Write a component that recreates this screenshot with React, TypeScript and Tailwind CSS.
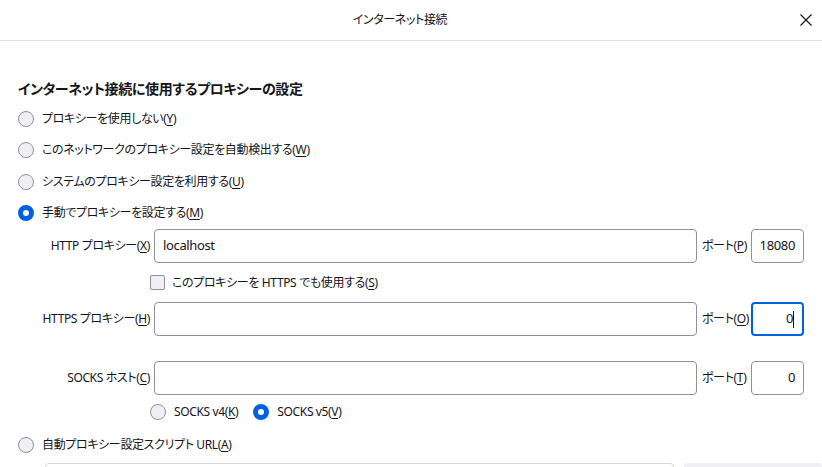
import { ReactNode } from "react";

const Key = ({ k }: { k: string }) => (
  <span>
    (<u className="underline-offset-2">{k}</u>)
  </span>
);

const Radio = ({ checked }: { checked?: boolean }) =>
  checked ? (
    <span className="w-4 h-4 rounded-full border-[5px] border-[#0061e0] bg-white shrink-0" />
  ) : (
    <span className="w-4 h-4 rounded-full border border-[#8f8f9d] bg-[#f0f0f4] shrink-0" />
  );

const RadioRow = ({ checked, children }: { checked?: boolean; children: ReactNode }) => (
  <div className="h-[31.5px] flex items-center gap-2">
    <Radio checked={checked} />
    <span>{children}</span>
  </div>
);

const Field = ({ value, focused, right }: { value?: string; focused?: boolean; right?: boolean }) => (
  <div
    className={`h-full rounded-[4px] flex items-center px-2 text-[13px] ${right ? "justify-end" : ""} ${
      focused ? "border-2 border-[#0061e0]" : "border border-[#8f8f9d]"
    }`}
  >
    <span>{value}</span>
    {focused && <span className="w-px h-[17px] bg-[#15141a]" />}
  </div>
);

const ProxyRow = ({
  label,
  host,
  portLabel,
  port,
  focused,
}: {
  label: ReactNode;
  host?: string;
  portLabel: ReactNode;
  port: string;
  focused?: boolean;
}) => (
  <div className="h-[34px] flex items-stretch">
    <div className="w-[132px] flex items-center justify-end whitespace-nowrap">{label}</div>
    <div className="w-[543px] ml-1">
      <Field value={host} />
    </div>
    <div className="w-[45px] ml-[5px] flex items-center whitespace-nowrap">{portLabel}</div>
    <div className="w-[53px] ml-[4px]">
      <Field value={port} right focused={focused} />
    </div>
  </div>
);

export default function App() {
  return (
    <div className="w-[822px] h-[467px] overflow-hidden bg-white text-[#15141a] text-[12px] tracking-[-0.03em] font-['Noto_Sans','Noto_Sans_CJK_JP',sans-serif] [font-feature-settings:'palt']">
      <header className="h-[41px] border-b border-[#e0e0e6] flex items-center">
        <div className="flex-1 text-center">インターネット接続</div>
        <button className="w-[22px] h-full flex items-center">
          <svg width="12" height="12" viewBox="0 0 12 12" fill="none" stroke="#15141a" strokeWidth="1.1">
            <path d="M0.5 0.5 L11.5 11.5 M11.5 0.5 L0.5 11.5" />
          </svg>
        </button>
      </header>

      <div className="pl-[18px] pt-[38px]">
        <h2 className="text-[14px] leading-5 font-bold">インターネット接続に使用するプロキシーの設定</h2>

        <div className="mt-1">
          <RadioRow>
            プロキシーを使用しない<Key k="Y" />
          </RadioRow>
          <RadioRow>
            このネットワークのプロキシー設定を自動検出する<Key k="W" />
          </RadioRow>
          <RadioRow>
            システムのプロキシー設定を利用する<Key k="U" />
          </RadioRow>
          <RadioRow checked>
            手動でプロキシーを設定する<Key k="M" />
          </RadioRow>
        </div>

        <ProxyRow
          label={
            <span>
              HTTP プロキシー<Key k="X" />
            </span>
          }
          host="localhost"
          portLabel={
            <span>
              ポート<Key k="P" />
            </span>
          }
          port="18080"
        />

        <div className="h-[39px] flex items-center gap-[7px] pl-[132px]">
          <span className="w-[15px] h-[15px] rounded-[2px] border border-[#8f8f9d] bg-[#f0f0f4]" />
          <span>
            このプロキシーを HTTPS でも使用する<Key k="S" />
          </span>
        </div>

        <ProxyRow
          label={
            <span>
              HTTPS プロキシー<Key k="H" />
            </span>
          }
          portLabel={
            <span>
              ポート<Key k="O" />
            </span>
          }
          port="0"
          focused
        />

        <div className="mt-[25px]">
          <ProxyRow
            label={
              <span>
                SOCKS ホスト<Key k="C" />
              </span>
            }
            portLabel={
              <span>
                ポート<Key k="T" />
              </span>
            }
            port="0"
          />
        </div>

        <div className="h-[34px] flex items-center pl-[132px] gap-[15px]">
          <div className="flex items-center gap-2">
            <Radio />
            <span>
              SOCKS v4<Key k="K" />
            </span>
          </div>
          <div className="flex items-center gap-2">
            <Radio checked />
            <span>
              SOCKS v5<Key k="V" />
            </span>
          </div>
        </div>

        <RadioRow>
          自動プロキシー設定スクリプト URL<Key k="A" />
        </RadioRow>

        <div className="mt-[2px] flex gap-[10px] pl-[27px]">
          <div className="w-[638px] h-[34px] rounded-[4px] border border-[#d6d6dc]" />
          <div className="w-[140px] h-[34px] rounded-[4px] bg-[#f0f0f4]" />
        </div>
      </div>
    </div>
  );
}
